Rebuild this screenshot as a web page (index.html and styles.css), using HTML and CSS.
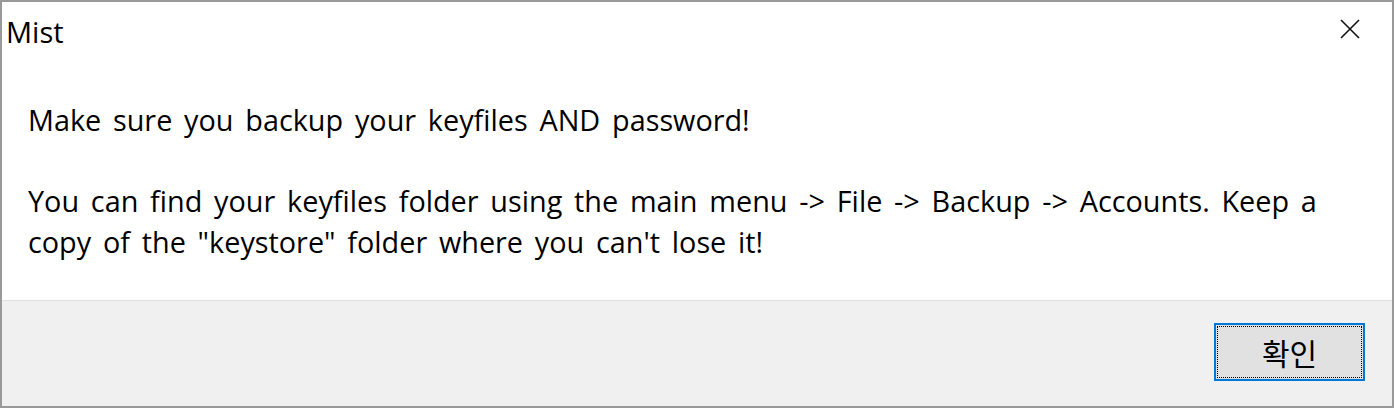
FILE: index.html
```html
<!DOCTYPE html>
<html lang="en">
<head>
<meta charset="utf-8">
<link rel="stylesheet" href="styles.css">
</head>
<body>
<div class="dialog">
  <div class="titlebar">
    <span class="title">Mist</span>
    <span class="close">
      <svg width="20" height="20" viewBox="0 0 20 20"><path d="M1 1 L19 19 M19 1 L1 19" stroke="#111" stroke-width="1.6" fill="none"/></svg>
    </span>
  </div>
  <div class="content">
    <p class="msg">Make sure you backup your keyfiles AND password!</p>
    <p class="msg">You can find your keyfiles folder using the main menu -&gt; File -&gt; Backup -&gt; Accounts. Keep a<br>copy of the "keystore" folder where you can't lose it!</p>
  </div>
  <div class="footer">
    <button class="ok"><span class="focus">확인</span></button>
  </div>
</div>
</body>
</html>
```
FILE: styles.css
```css
html, body {
  margin: 0;
  padding: 0;
}
body {
  width: 1394px;
  height: 408px;
  overflow: hidden;
  font-family: "Open Sans", "Noto Sans CJK KR", sans-serif;
  color: #000;
}
.dialog {
  box-sizing: border-box;
  width: 1394px;
  height: 408px;
  border: 2px solid #999;
  background: #fff;
  display: flex;
  flex-direction: column;
}
.titlebar {
  height: 62px;
  flex-shrink: 0;
  display: flex;
  align-items: flex-start;
  justify-content: space-between;
}
.title {
  font-size: 29px;
  line-height: 30px;
  padding: 15px 0 0 4px;
}
.close {
  padding: 17px 32px 0 0;
  line-height: 0;
}
.content {
  flex: 1;
  min-height: 0;
  overflow: hidden;
  padding: 36px 0 0 26px;
}
.msg {
  margin: 0 0 40.5px 0;
  font-size: 28.8px;
  line-height: 40.5px;
  word-spacing: 4.3px;
  white-space: nowrap;
}
.msg:last-child {
  margin-bottom: 0;
}
.footer {
  flex-shrink: 0;
  height: 106px;
  box-sizing: border-box;
  border-top: 1px solid #dfdfdf;
  background: #f0f0f0;
  display: flex;
  justify-content: flex-end;
  align-items: flex-start;
  padding: 22px 27px 0 0;
}
.ok {
  box-sizing: border-box;
  width: 151px;
  height: 58px;
  margin: 0;
  padding: 1px;
  border: 2px solid #0078d7;
  background: #e1e1e1;
  display: flex;
  font-family: "Noto Sans CJK KR", sans-serif;
  color: #000;
}
.focus {
  flex: 1;
  border: 1px dotted #000;
  display: flex;
  align-items: center;
  justify-content: center;
  font-size: 30px;
  line-height: 1;
}
```
